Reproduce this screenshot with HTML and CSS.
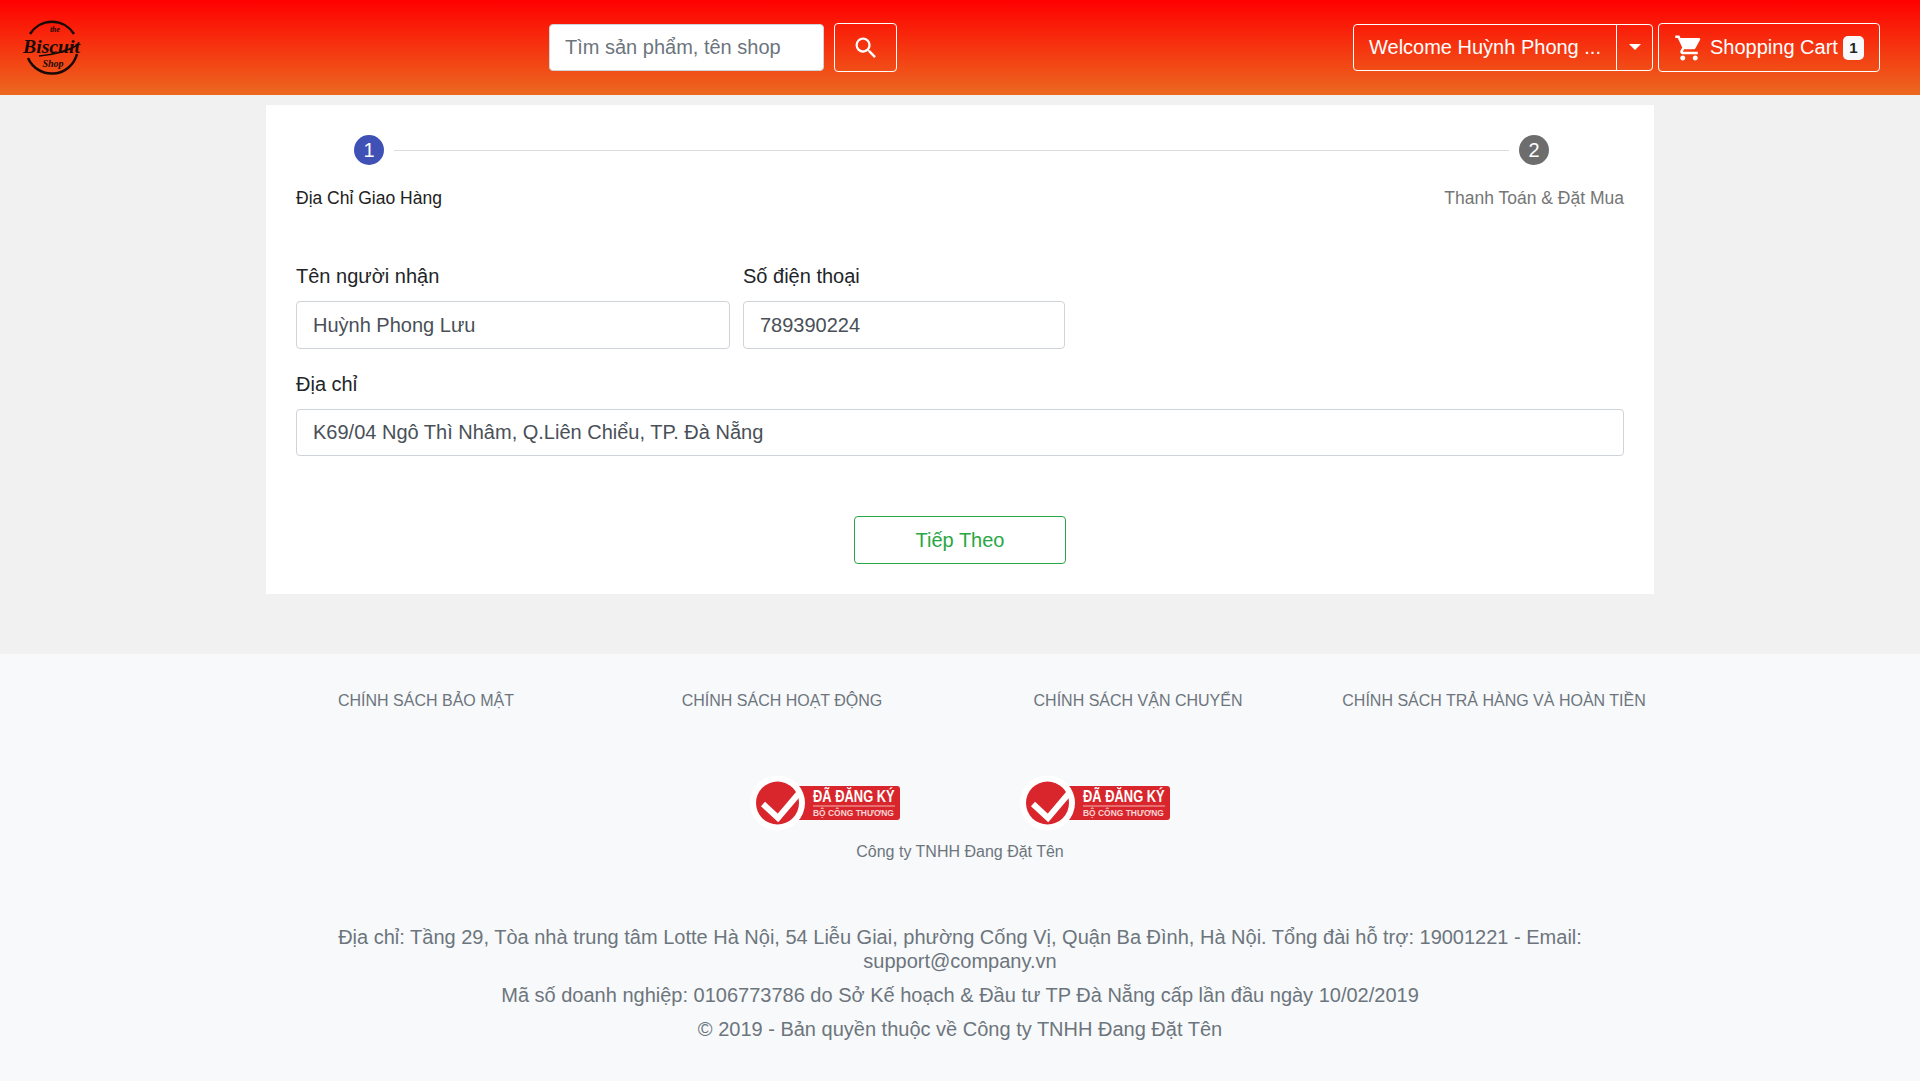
FILE: index.html
```html
<!DOCTYPE html>
<html lang="vi">
<head>
<meta charset="utf-8">
<title>Biscuit Shop</title>
<link rel="stylesheet" href="styles.css">
</head>
<body>
<header class="topbar">
  <a class="logo" href="#">
    <svg width="64" height="60" viewBox="0 0 64 60">
      <path d="M10 16A26 26 0 0 1 54 16" fill="none" stroke="#1a0a06" stroke-width="2.5"/>
      <path d="M8 40A26 26 0 0 0 57 36" fill="none" stroke="#1a0a06" stroke-width="2.5"/>
      <path d="M19 38Q42 36 58 27" fill="none" stroke="#1a0a06" stroke-width="1.6"/>
      <text x="35" y="14" class="logo-the" text-anchor="middle">the</text>
      <text x="3" y="35" class="logo-main" textLength="57" lengthAdjust="spacingAndGlyphs">Biscuit</text>
      <text x="33" y="49" class="logo-shop" text-anchor="middle">Shop</text>
    </svg>
  </a>
  <form class="search">
    <div class="search-input">Tìm sản phẩm, tên shop</div>
    <button class="search-btn" type="button" aria-label="Search">
      <svg width="28" height="28" viewBox="0 0 24 24"><path fill="#fff" d="M15.5 14h-.79l-.28-.27A6.47 6.47 0 0 0 16 9.5 6.5 6.5 0 1 0 9.5 16c1.61 0 3.09-.59 4.23-1.57l.27.28v.79l5 4.99L20.49 19l-4.99-5zm-6 0C7.01 14 5 11.99 5 9.5S7.01 5 9.5 5 14 7.01 14 9.5 11.99 14 9.5 14z"/></svg>
    </button>
  </form>
  <div class="actions">
    <div class="welcome">
      <span class="welcome-text">Welcome Huỳnh Phong ...</span>
      <span class="welcome-caret"><i class="caret"></i></span>
    </div>
    <div class="cart">
      <svg width="30" height="30" viewBox="0 0 24 24"><path fill="#fff" d="M7 18c-1.1 0-1.99.9-1.99 2S5.9 22 7 22s2-.9 2-2-.9-2-2-2zM1 2v2h2l3.6 7.59-1.35 2.45c-.16.28-.25.61-.25.96 0 1.1.9 2 2 2h12v-2H7.42c-.14 0-.25-.11-.25-.25l.03-.12.9-1.63h7.45c.75 0 1.41-.41 1.75-1.03l3.58-6.49A1 1 0 0 0 20 4H5.21l-.94-2H1zm16 16c-1.1 0-1.99.9-1.99 2s.89 2 1.99 2 2-.9 2-2-.9-2-2-2z"/></svg>
      <span class="cart-label">Shopping Cart</span>
      <span class="cart-badge">1</span>
    </div>
  </div>
</header>

<main class="card">
  <div class="stepper">
    <div class="step">
      <span class="step-dot step-dot-active">1</span>
      <span class="step-label step-label-active">Địa Chỉ Giao Hàng</span>
    </div>
    <div class="step-line"></div>
    <div class="step">
      <span class="step-dot">2</span>
      <span class="step-label">Thanh Toán &amp; Đặt Mua</span>
    </div>
  </div>
  <form class="address-form">
    <div class="form-row">
      <div class="field field-name">
        <label class="field-label">Tên người nhận</label>
        <div class="field-input field-input-tall">Huỳnh Phong Lưu</div>
      </div>
      <div class="field field-phone">
        <label class="field-label">Số điện thoại</label>
        <div class="field-input field-input-tall">789390224</div>
      </div>
    </div>
    <div class="field">
      <label class="field-label">Địa chỉ</label>
      <div class="field-input">K69/04 Ngô Thì Nhâm, Q.Liên Chiểu, TP. Đà Nẵng</div>
    </div>
    <div class="form-submit"><button class="next-btn" type="button">Tiếp Theo</button></div>
  </form>
</main>

<footer class="footer">
  <nav class="policy">
    <a href="#">CHÍNH SÁCH BẢO MẬT</a>
    <a href="#">CHÍNH SÁCH HOẠT ĐỘNG</a>
    <a href="#">CHÍNH SÁCH VẬN CHUYỂN</a>
    <a href="#">CHÍNH SÁCH TRẢ HÀNG VÀ HOÀN TIỀN</a>
  </nav>
  <div class="badges">
    <svg class="badge" width="150" height="56" viewBox="0 0 150 56">
      <rect x="40" y="11" width="110" height="34" rx="3" fill="#d8262c"/>
      <circle cx="27.5" cy="28" r="27.5" fill="#fff"/>
      <circle cx="27.5" cy="28" r="21.5" fill="#d8262c"/>
      <path d="M13 29L28 43L50 17" fill="none" stroke="#fff" stroke-width="6"/>
      <text transform="translate(63 27) scale(.807 1)" class="badge-top">ĐÃ ĐĂNG KÝ</text>
      <line x1="63" x2="145" y1="31" y2="31" stroke="#f3b5b5" stroke-width="1"/>
      <text transform="translate(63 41) scale(.94 1)" class="badge-bottom">BỘ CÔNG THƯƠNG</text>
    </svg>
    <svg class="badge" width="150" height="56" viewBox="0 0 150 56">
      <rect x="40" y="11" width="110" height="34" rx="3" fill="#d8262c"/>
      <circle cx="27.5" cy="28" r="27.5" fill="#fff"/>
      <circle cx="27.5" cy="28" r="21.5" fill="#d8262c"/>
      <path d="M13 29L28 43L50 17" fill="none" stroke="#fff" stroke-width="6"/>
      <text transform="translate(63 27) scale(.807 1)" class="badge-top">ĐÃ ĐĂNG KÝ</text>
      <line x1="63" x2="145" y1="31" y2="31" stroke="#f3b5b5" stroke-width="1"/>
      <text transform="translate(63 41) scale(.94 1)" class="badge-bottom">BỘ CÔNG THƯƠNG</text>
    </svg>
  </div>
  <p class="company">Công ty TNHH Đang Đặt Tên</p>
  <div class="legal">
    <p>Địa chỉ: Tầng 29, Tòa nhà trung tâm Lotte Hà Nội, 54 Liễu Giai, phường Cống Vị, Quận Ba Đình, Hà Nội. Tổng đài hỗ trợ: 19001221 - Email: support@company.vn</p>
    <p>Mã số doanh nghiệp: 0106773786 do Sở Kế hoạch &amp; Đầu tư TP Đà Nẵng cấp lần đầu ngày 10/02/2019</p>
    <p>© 2019 - Bản quyền thuộc về Công ty TNHH Đang Đặt Tên</p>
  </div>
</footer>
</body>
</html>
```
FILE: styles.css
```css
* { box-sizing: border-box; }
html, body { margin: 0; padding: 0; }
body {
  font-family: "Liberation Sans", Arial, sans-serif;
  background: #f1f1f1;
  color: #212529;
  min-height: 1081px;
  display: flex;
  flex-direction: column;
}
p { margin: 0; }
a { text-decoration: none; color: inherit; }

.topbar {
  height: 95px;
  background: linear-gradient(180deg, #ff0000 0%, #ec691f 100%);
  display: flex;
  align-items: center;
  padding: 0 40px 0 20px;
}
.logo { display: block; width: 64px; height: 60px; }
.logo svg { display: block; }
.logo-the { font: italic 700 8px "Liberation Serif", serif; fill: #1a0a06; }
.logo-main { font: italic 700 19px "Liberation Serif", serif; fill: #1a0a06; }
.logo-shop { font: italic 700 10px "Liberation Serif", serif; fill: #1a0a06; }

.search { display: flex; align-items: center; margin-left: 465px; gap: 10px; }
.search-input {
  width: 275px;
  height: 47px;
  background: #fff;
  border: 1px solid #ced4da;
  border-radius: 4px;
  padding: 0 15px;
  display: flex;
  align-items: center;
  font-size: 20px;
  color: #6c757d;
}
.search-btn {
  width: 63px;
  height: 49px;
  background: transparent;
  border: 1px solid #fff;
  border-radius: 4px;
  padding: 0;
  display: flex;
  align-items: center;
  justify-content: center;
}

.actions { margin-left: auto; display: flex; align-items: center; gap: 5px; color: #fff; font-size: 20px; }
.welcome {
  display: flex;
  height: 47px;
  width: 300px;
  border: 1px solid #fff;
  border-radius: 4px;
}
.welcome-text { flex: 1; display: flex; align-items: center; padding-left: 15px; white-space: nowrap; border-right: 1px solid #fff; }
.welcome-caret { width: 35px; display: flex; align-items: center; justify-content: center; }
.caret { width: 0; height: 0; border: 6px solid transparent; border-top-color: #fff; border-bottom: 0; margin-top: -1px; }
.cart {
  display: flex;
  align-items: center;
  width: 222px;
  height: 49px;
  border: 1px solid #fff;
  border-radius: 4px;
  padding-left: 15px;
}
.cart-label { margin-left: 6px; white-space: nowrap; }
.cart-badge {
  margin-left: 5px;
  width: 21px;
  height: 24px;
  background: #f8f9fa;
  color: #212529;
  border-radius: 5px;
  font-size: 15px;
  font-weight: 700;
  display: flex;
  align-items: center;
  justify-content: center;
}

.card {
  width: 1388px;
  height: 489px;
  margin: 10px auto 60px;
  background: #fff;
  padding: 30px 30px 0;
}
.stepper { display: flex; align-items: flex-start; height: 60px; }
.step { display: flex; flex-direction: column; align-items: center; gap: 20px; }
.step-dot {
  width: 30px;
  height: 30px;
  border-radius: 50%;
  background: #6d6d6d;
  color: #fff;
  font-size: 20px;
  display: flex;
  align-items: center;
  justify-content: center;
}
.step-dot-active { background: #3f51b5; }
.step-label { font-size: 17.5px; line-height: 26px; color: #757575; white-space: nowrap; }
.step-label-active { color: #212121; }
.step-line { flex: 1; height: 1px; background: #dcdde0; margin: 15px -65px 0 -48px; }

.address-form { margin-top: 66px; }
.form-row { display: flex; gap: 13px; }
.field { margin-bottom: 20px; }
.field-name { width: 434px; }
.field-phone { width: 322px; }
.field-label { display: block; font-size: 20px; line-height: 30px; margin-bottom: 10px; color: #212529; }
.field-input {
  height: 47px;
  border: 1px solid #ced4da;
  border-radius: 4px;
  padding: 0 16px;
  display: flex;
  align-items: center;
  font-size: 20px;
  color: #495057;
}
.field-input-tall { height: 48px; }
.form-submit { display: flex; justify-content: center; margin-top: 60px; }
.address-form > .field { margin-bottom: 0; }
.next-btn {
  width: 212px;
  height: 48px;
  background: #fff;
  border: 1px solid #28a745;
  border-radius: 4px;
  color: #28a745;
  font: 20px "Liberation Sans", Arial, sans-serif;
}

.footer {
  flex: 1;
  background: #f8f9fa;
  color: #6c757d;
  padding-top: 35px;
  text-align: center;
}
.policy { display: grid; grid-template-columns: repeat(4, 356px); justify-content: center; font-size: 16px; line-height: 24px; }
.badges { display: flex; justify-content: center; gap: 120px; margin-top: 62px; }
.badge { display: block; }
.badge-top { font: 700 16px "Liberation Sans", sans-serif; fill: #fff; }
.badge-bottom { font: 700 9px "Liberation Sans", sans-serif; fill: #f7d4d4; }
.company { font-size: 16px; line-height: 24px; margin-top: 9px; }
.legal { width: 1280px; margin: 61px auto 0; font-size: 20px; line-height: 24px; }
.legal p { margin-bottom: 10px; }
```
